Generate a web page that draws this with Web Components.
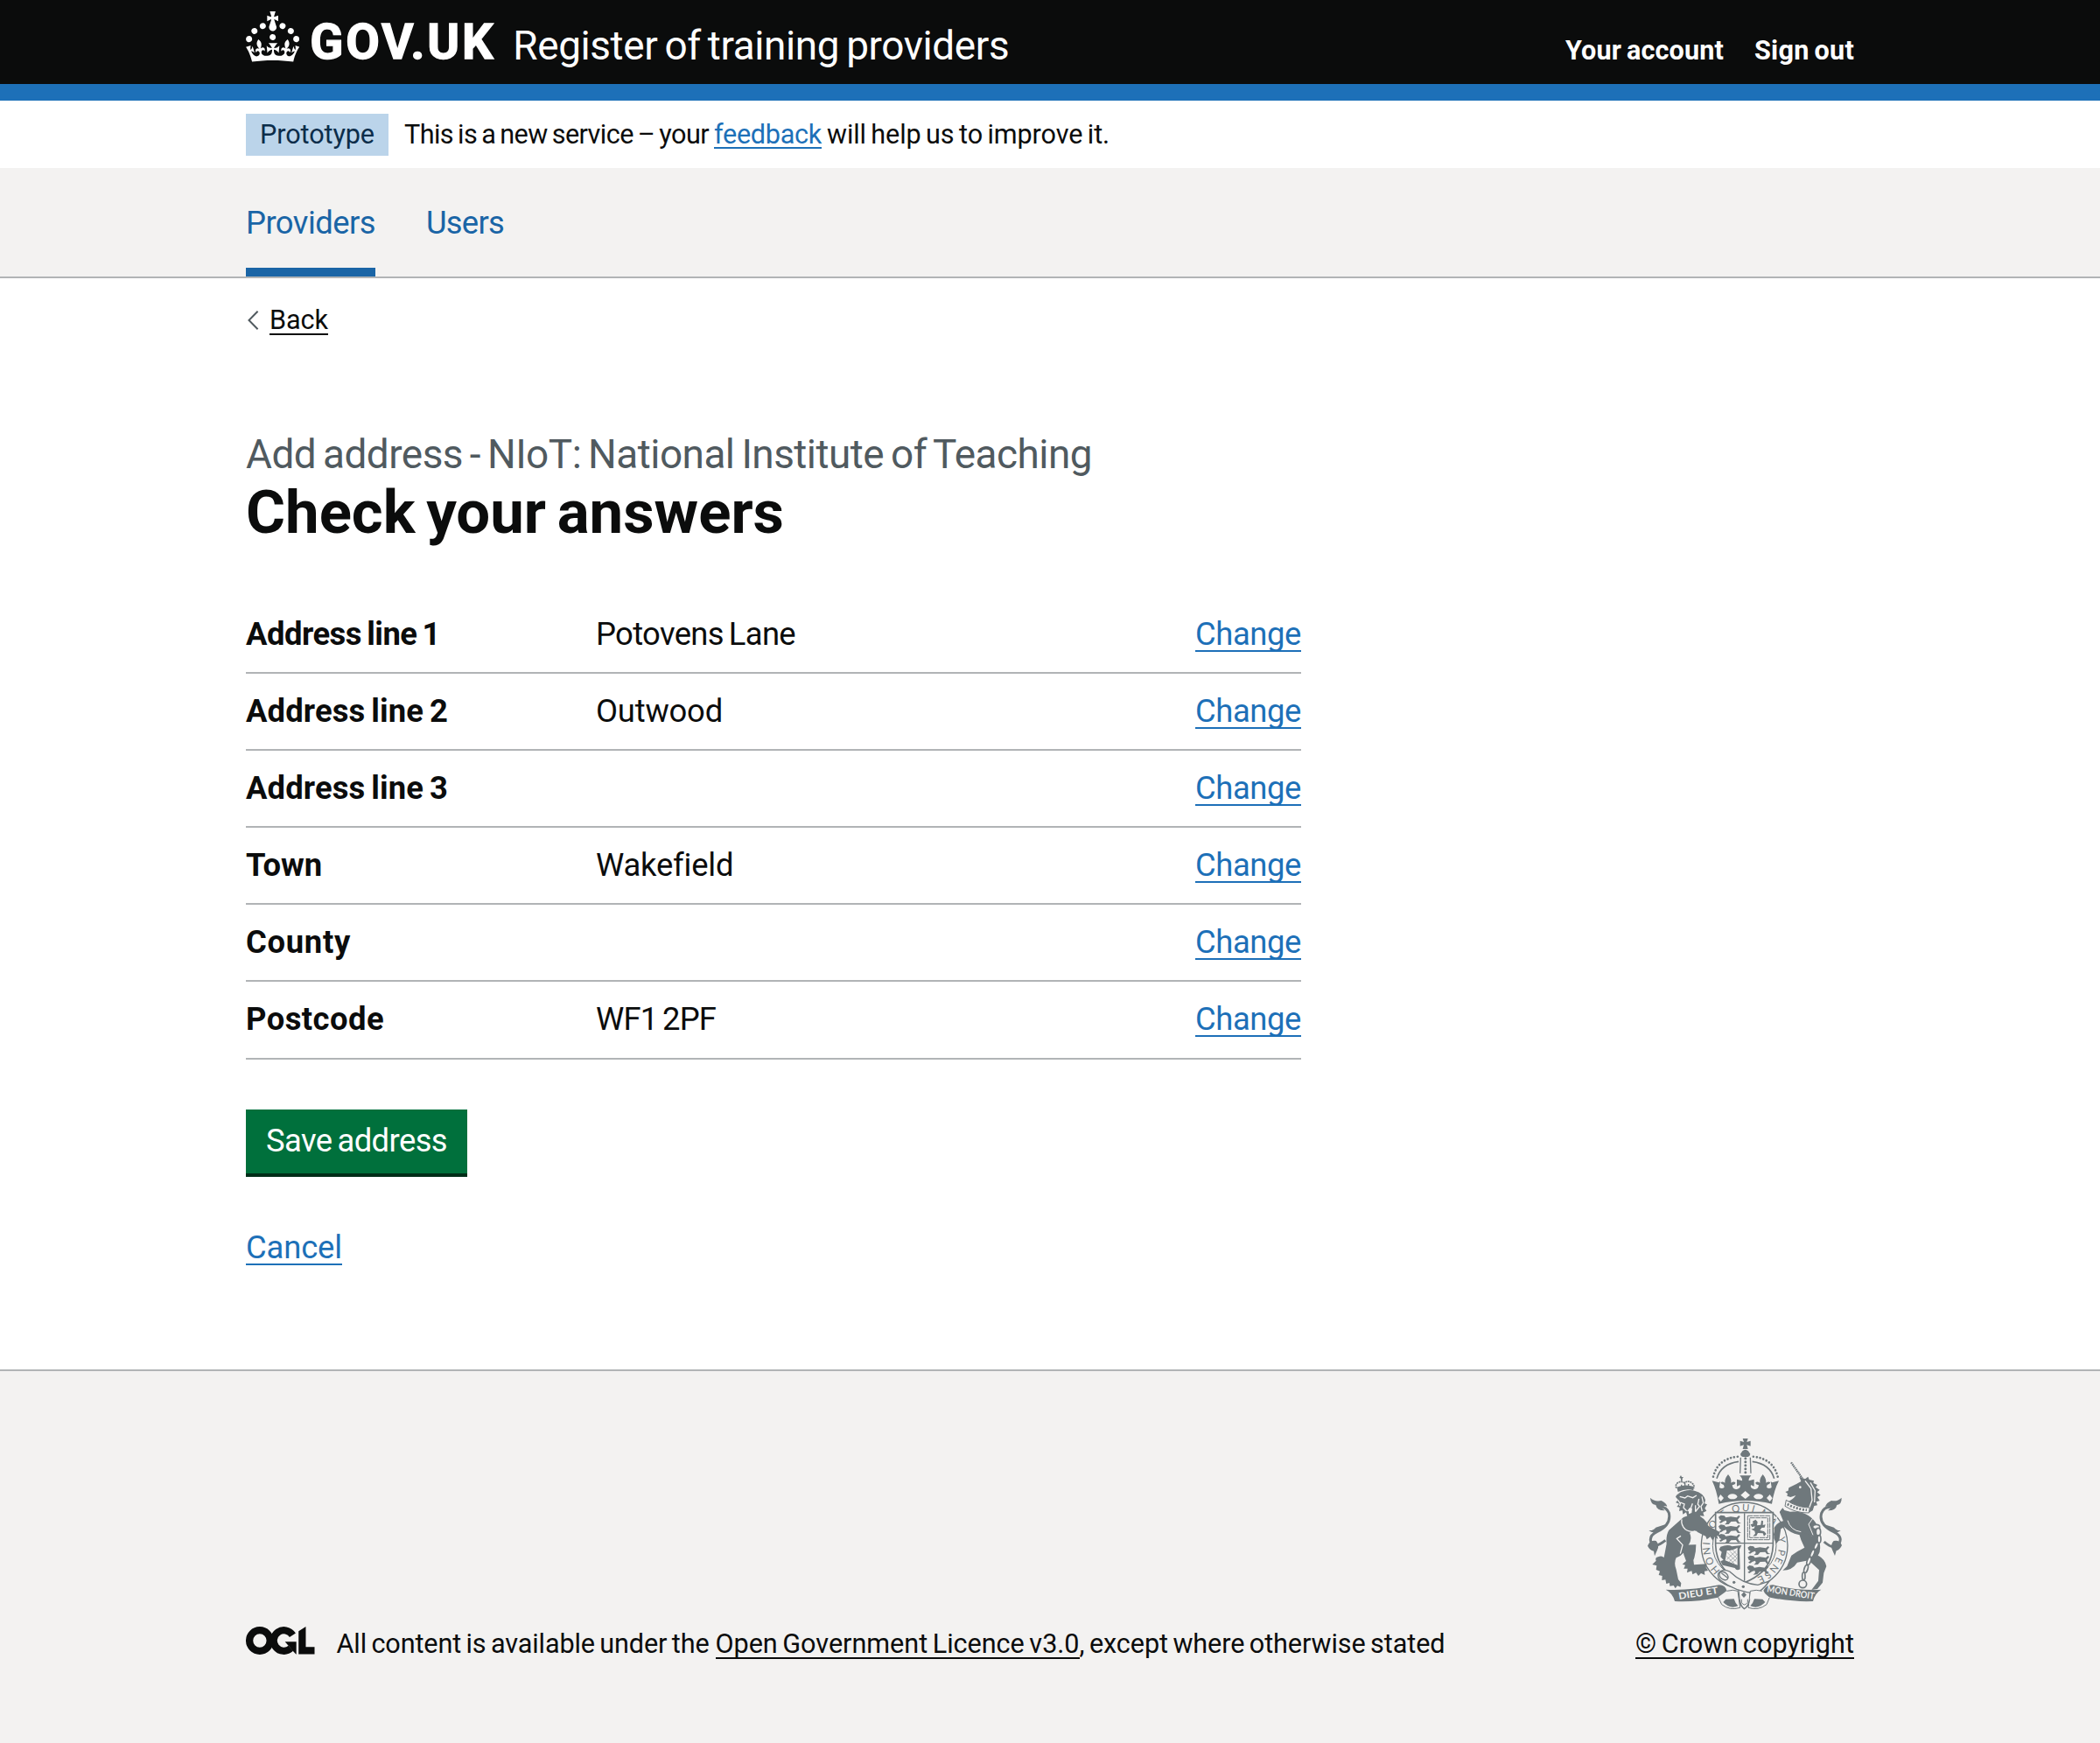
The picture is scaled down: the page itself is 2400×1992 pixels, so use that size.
<!DOCTYPE html>
<html lang="en">
<head>
<meta charset="utf-8">
<title>Check your answers</title>
<style>
  html, body { margin: 0; padding: 0; }
  body { background: #fff; color: #0b0c0c; font-family: Roboto, "Liberation Sans", sans-serif; font-size: 36.4px; }
</style>
</head>
<body>
<reg-page></reg-page>
<script>
const define = (name, html, setup) => customElements.define(name, class extends HTMLElement {
  constructor() {
    super();
    this.attachShadow({ mode: 'open' }).innerHTML = html;
  }
  connectedCallback() { if (setup) setup.call(this, this.shadowRoot); }
});

/* A single line of text, tracked so that it fills the given measure. */
define('fit-text', `<style>
  :host { display: inline-block; white-space: nowrap; vertical-align: baseline; }
  span { display: inline-block; white-space: pre; word-spacing: -0.065em; }
</style><span><slot></slot></span>`, function (root) {
  const span = root.querySelector('span');
  const want = parseFloat(this.getAttribute('measure'));
  this.style.width = want + 'px';
  const count = this.textContent.length;
  span.style.letterSpacing = '0px';
  const natural = span.getBoundingClientRect().width;
  span.style.letterSpacing = ((want - natural) / count) + 'px';
});

define('reg-link', `<style>
  :host { display: inline-block; color: var(--link, #1d70b8); }
  a { display: inline-block; color: inherit; text-decoration: none; line-height: inherit;
      background: linear-gradient(currentColor, currentColor) 0 var(--rule-y, 35px) / 100% 2px no-repeat; }
</style><a><slot></slot></a>`);

define('gov-crown', `<style>:host{display:block;width:61.3px;height:57.5px} svg{display:block;width:100%;height:100%}</style>
<svg viewBox="0 0 32 30" fill="#fff"><path fill-rule="evenodd" d="M22.6 10.4c-1 .4-2-.1-2.4-1-.4-.9.1-2 1-2.4.9-.4 2 .1 2.4 1s-.1 2-1 2.4m-5.9 6.7c-.9.4-2-.1-2.4-1-.4-.9.1-2 1-2.4.9-.4 2 .1 2.4 1s-.1 2-1 2.4m10.8-3.7c-1 .4-2-.1-2.4-1-.4-.9.1-2 1-2.4.9-.4 2 .1 2.4 1s0 2-1 2.4m3.3 4.8c-1 .4-2-.1-2.4-1-.4-.9.1-2 1-2.4.9-.4 2 .1 2.4 1s-.1 2-1 2.4M17 4.7l2.3 1.2V2.5l-2.3.7-.2-.2.9-3h-3.4l.9 3-.2.2c-.1.1-2.3-.7-2.3-.7v3.4L15 4.7c.1.1.1.2.2.2l-1.3 4c-.1.2-.1.4-.1.6 0 1.1.8 2 1.9 2.2h.7c1-.2 1.9-1.1 1.9-2.1 0-.2 0-.4-.1-.6l-1.3-4c-.1-.2 0-.2.1-.3m-7.6 5.7c.9.4 2-.1 2.4-1 .4-.9-.1-2-1-2.4-.9-.4-2 .1-2.4 1s0 2 1 2.4m-5 3c.9.4 2-.1 2.4-1 .4-.9-.1-2-1-2.4-.9-.4-2 .1-2.4 1s.1 2 1 2.4m-3.2 4.8c.9.4 2-.1 2.4-1 .4-.9-.1-2-1-2.4-.9-.4-2 .1-2.4 1s0 2 1 2.4m14.8 11c4.4 0 8.6.3 12.3.8 1.1-4.5 2.4-7 3.7-8.8l-2.5-.9c.2 1.3.3 1.9 0 2.7-.4-.4-.8-1.1-1.1-2.3l-1.2 4c.7-.5 1.3-.8 2-.9-1.1 2.5-2.6 3.1-3.5 3-1.1-.2-1.7-1.2-1.5-2.1.3-1.2 1.5-1.5 2.1-.1 1.1-2.3-.8-3-2-2.3 1.9-1.9 2.1-3.5.6-5.6-2.1 1.6-2.1 3.2-1.2 5.5-1.2-1.4-3.2-.6-2.5 1.6.9-1.4 2.1-.5 1.9.8-.2 1.1-1.7 2.1-3.5 1.9-2.7-.2-2.9-2.1-2.9-3.6.7-.1 1.9.5 2.9 1.9l.4-4.3c-1.1 1.1-2.1 1.4-3.2 1.4.4-1.2 2.1-3 2.1-3h-5.4s1.7 1.9 2.1 3c-1.1 0-2.1-.2-3.2-1.4l.4 4.3c1-1.4 2.2-2 2.9-1.9-.1 1.5-.2 3.4-2.9 3.6-1.9.2-3.4-.8-3.5-1.9-.2-1.3 1-2.2 1.9-.8.7-2.3-1.2-3-2.5-1.6.9-2.2.9-3.9-1.2-5.5-1.5 2-1.3 3.7.6 5.6-1.2-.7-3.1 0-2 2.3.6-1.4 1.8-1.1 2.1.1.2.9-.3 1.9-1.5 2.1-.9.2-2.4-.5-3.5-3 .6 0 1.2.3 2 .9l-1.2-4c-.3 1.1-.7 1.9-1.1 2.3-.3-.8-.2-1.4 0-2.7l-2.9.9C1.3 23 2.6 25.5 3.7 30c3.7-.5 7.9-.8 12.3-.8"/></svg>`);

define('reg-header', `<style>
  :host { display: block; height: 96px; background: #0b0c0c; border-bottom: 19px solid #1d70b8; color: #fff; }
  .in { box-sizing: border-box; width: 1838px; margin: 0 auto; height: 96px; display: flex; align-items: flex-start; }
  gov-crown { margin-top: 13px; }
  .gov { font-weight: 700; font-size: 56px; line-height: 66px; margin: 15px 0 0 12px; -webkit-text-stroke: 1.4px #fff; }
  .name { font-size: 45.9px; line-height: 54px; margin: 25px 0 0 20px; }
  nav { display: flex; margin: 40px 0 0 auto; gap: 35px; font-weight: 700; font-size: 30.6px; line-height: 36px; }
</style><div class="in">
  <gov-crown></gov-crown>
  <div class="gov"><fit-text measure="212">GOV.UK</fit-text></div>
  <div class="name"><fit-text measure="567">Register of training providers</fit-text></div>
  <nav><fit-text measure="181">Your account</fit-text><fit-text measure="114">Sign out</fit-text></nav>
</div>`);

define('reg-phase', `<style>
  :host { display: block; width: 1838px; margin: 0 auto; height: 77px; font-size: 30.6px; line-height: 36px; }
  .row { display: flex; padding-top: 15px; align-items: flex-start; --rule-y: 32px; }
  .tag { background: #bbd4ea; color: #0c2d4a; height: 48px; width: 163px; box-sizing: border-box; padding: 6px 0 0 16px; }
  .msg { display: flex; margin: 6px 0 0 18px; }
  .msg reg-link { margin: 0 6px 0 6px; }
</style><div class="row">
  <div class="tag"><fit-text measure="131">Prototype</fit-text></div>
  <div class="msg"><fit-text measure="348">This is a new service – your</fit-text><reg-link><fit-text measure="123">feedback</fit-text></reg-link><fit-text measure="323">will help us to improve it.</fit-text></div>
</div>`);

define('reg-nav', `<style>
  :host { display: block; background: #f3f2f1; height: 124px; border-bottom: 2px solid #b1b4b6; color: #1a65a6; }
  .in { width: 1838px; margin: 0 auto; display: flex; gap: 58px; }
  .item { box-sizing: border-box; height: 124px; padding-top: 42px; line-height: 42px; }
  .on { border-bottom: 10px solid #1a65a6; }
</style><div class="in">
  <div class="item on"><fit-text measure="148">Providers</fit-text></div>
  <div class="item"><fit-text measure="89">Users</fit-text></div>
</div>`);

define('reg-back', `<style>
  :host { display: flex; align-items: flex-start; font-size: 30.6px; line-height: 36px; --link: #0b0c0c; --rule-y: 33px; padding-top: 30px; }
  svg { width: 15px; height: 24px; margin: 6px 12px 0 0; display: block; }
</style><svg viewBox="0 0 15 24" fill="none" stroke="#505a5f" stroke-width="2"><path d="M13.6 1.8 3.5 12l10.100 10.200"/></svg>
<reg-link><fit-text measure="67">Back</fit-text></reg-link>`);

define('reg-title', `<style>
  :host { display: block; }
  .cap { color: #505a5f; font-size: 45.9px; line-height: 54px; }
  h1 { margin: 0; font-size: 68.9px; line-height: 80px; font-weight: 700; }
</style><div class="cap"><fit-text measure="967">Add address - NIoT: National Institute of Teaching</fit-text></div>
<h1><fit-text measure="615">Check your answers</fit-text></h1>`);

define('reg-row', `<style>
  :host { box-sizing: border-box; display: grid; grid-template-columns: 400px 1fr auto; height: 88.1px; padding-top: 22px; border-bottom: 2px solid #b1b4b6; line-height: 42px; --rule-y: 39px; }
  .k { font-weight: 700; }
</style><div class="k"><slot name="key"></slot></div><div><slot name="value"></slot></div>
<reg-link><fit-text measure="121">Change</fit-text></reg-link>`);

define('reg-button', `<style>
  :host { display: block; width: 253px; height: 73px; background: #00703c; color: #fff; border-bottom: 4px solid #002d18; }
  button { all: unset; display: block; box-sizing: border-box; width: 100%; height: 100%; padding-left: 23px; line-height: 42px; }
</style><button><slot></slot></button>`);

define('ogl-logo', `<style>:host{display:block;width:78.500px;height:32px} svg{display:block;width:100%;height:100%}</style>
<svg viewBox="0 0 483.200 195.700" fill="none" stroke="#0b0c0c" stroke-width="50.700">
  <circle cx="97.800" cy="97.800" r="72.500"/>
  <path d="M329 59A72.500 72.500 0 1 0 316 152"/>
  <path d="M275 105.700h80v87.800h-3L332 171l-33-38z" fill="#0b0c0c" stroke="none"/>
  <path d="M421.500 .1v142.700h61.700v50.700H370.800V32.400z" fill="#0b0c0c" stroke="none"/>
</svg>`);

define('royal-arms', `<style>:host{display:block;width:222px;height:196px} svg{display:block;width:100%;height:100%}</style>
<svg viewBox="72 39 666 588" fill="#6f787c" stroke="none">
  <defs>
    <path id="ring" d="M328 497A118 118 0 1 1 440 518"/>
    <g id="beast"><path d="M0 6l8-6 12 2 5 6 17-3 20 3 8-7 4 4-8 10 4 9 8 4-12 1-6-8-17 1-8 9-14 1 7-7-2-7-9 3-9 6-6-3 8-6-6-3z"/></g>
  </defs>

  <!-- imperial crown -->
  <path d="M398 39h18l-4 12 13-4v18l-13-4 4 14h-18l4-14-13 4V47l13 4z"/>
  <path d="M397 82q10-9 20 0l7 10q-2 9-8 10h-18q-7-1-8-10z"/>
  <g fill="none" stroke="#6f787c">
    <path d="M297 170Q312 108 382 101M518 170Q503 108 433 101" stroke-width="8" stroke-linecap="round" stroke-dasharray=".1 11.500"/>
    <path d="M309 176Q324 126 384 118M506 176Q491 126 431 118" stroke-width="5"/>
    <path d="M391 104l-2 54M424 104l2 54" stroke-width="4"/>
    <path d="M407.500 107v50" stroke-width="9" stroke-linecap="round" stroke-dasharray=".1 12"/>
  </g>
  <path d="M293 184l23 6 5-4-3 21q9 7 17-1l-2-8q-12-4-10-9 6-4 14 2-2-13 11-29 13 16 10 29 9-7 15-1 1 7-11 9 2 17 18 13 12-3 9-14l-11 5v-24l18 5q2-7-8-18h39q-10 11-8 18l18-5v24l-11-5q-3 11 9 14 16 4 18-13-12-2-11-9 6-6 15 1-3-13 10-29 13 16 11 29 8-6 14-2 2 5-10 9l-2 8q8 8 17 1l-3-21 5 4 23-6q-17 33-24 79-89-22-182 0-7-46-23-79z"/>
  <g fill="#f3f2f1"><path d="M322 231l11 12-10 12-9-11zM407 219l16 14-16 13-16-13zM491 231l9 13-9 11-11-12z"/><ellipse cx="363" cy="238" rx="16" ry="9"/><ellipse cx="452" cy="238" rx="16" ry="9"/></g>

  <!-- garter -->
  <g fill="none" stroke="#6f787c" stroke-width="4"><circle cx="404" cy="406" r="148"/><circle cx="404" cy="406" r="109" stroke-width="3"/></g>
  <text font-family="Lato, sans-serif" font-size="34" letter-spacing="6" fill="#6f787c"><textPath href="#ring" startOffset="8">HONI SOIT QUI MAL Y PENSE</textPath></text>

  <!-- shield -->
  <path d="M305 293h197v112q-3 91-98 128-96-37-99-128z" fill="#f3f2f1" stroke="#6f787c" stroke-width="5"/>
  <path d="M404 295v232M306 398h195" stroke="#6f787c" stroke-width="4"/>
  <path d="M415 304h76v82h-76zM422 311h62v68h-62z" fill="none" stroke="#6f787c" stroke-width="3" stroke-dasharray="18 2"/>
  <path d="M432 323l10-6 7 8-2 12 13-2 2-15 6 2-1 14 9-2-3 10-10 1-6 9 14 3 8 9-8 8-4-10-17-1-5 10-12 1 8-9-2-9-12-6 10-3 3-7-10 3-5-9 9-3z"/>
  <use href="#beast" x="315" y="302"/><use href="#beast" x="315" y="334"/><use href="#beast" x="315" y="366"/>
  <use href="#beast" x="415" y="407"/><use href="#beast" x="415" y="440"/><use href="#beast" x="413" y="474"/>
  <path d="M322 410q26-10 39-1l33-4-7 14 2 68q-12 7-18-4l-42-10-7-13 10-5-10-10 4-17-9-8z"/>
  <path d="M344 423q20 0 36-10v60q-26-9-42-16z" fill="#f3f2f1"/>
  <path d="M345 430l31 31M353 424l25 26M363 420l16 18M343 443l26 25M376 424l-33 30M379 437l-27 24M379 450l-18 15" stroke="#6f787c" stroke-width="1.500"/>

  <!-- belt and buckle -->
  <g fill="#f3f2f1" stroke="#6f787c" stroke-width="4">
    <path d="M383 550l5 53q14 32 34 0l2-53z"/>
    <path d="M314 503q13-21 39-8 45 43 97 46l39-13q-24 34-48 42-70-6-118-44-12-9-9-23z"/>
    <ellipse cx="333" cy="510" rx="17" ry="12" transform="rotate(40 333 510)"/>
    <path d="M325 500l23 18"/>
  </g>
  <circle cx="368" cy="532" r="5"/><circle cx="400" cy="547" r="5"/><path d="M402 565l9 10-9 10-9-10z"/>

  <!-- lion -->
  <g>
    <path d="M171 209q-6-12 6-19 10-6 20 1 14-9 26 0 12 9 6 19" fill="none" stroke="#6f787c" stroke-width="5" stroke-dasharray="6 2"/>
    <path d="M200 190v20M188 197v10M212 195v10" stroke="#6f787c" stroke-width="4"/>
    <path d="M186 165l3 6 6 0-4 5v9h-5v-9l-5-3zM172 206q30-12 58-2l-1 13q-24-8-53 5z"/>
    <path d="M177 227q31-16 58-8 28 7 35 31l-3 12 9 3-8 13 6 9-12 6 4 12-14-1-3 12-12-5-11 8-5-17-12 7-5-17-11 7-2-14-11 3 2-13-10-2 8-10-12-5 9-8-9-11q5-13 19-12z"/>
    <path d="M182 238l18 5 9-7 18 6 13-8M184 258l14 6-3 12 11 11M226 262l-5 14-12 12M248 246l-4 18 6 8-14 18M258 238l5 22-8 12 4 16M176 250l8 12-2 8M236 268v22" fill="none" stroke="#f3f2f1" stroke-width="4"/>
    <path d="M213 278h12l-2 16-10 4z" fill="#f3f2f1"/>
    <path d="M195 309q22-11 46-9 30 13 39 38l17 10 23 12-3 8 7 8-14-4 3 12-13-8-4 14-9-14-12 9-4-11-38-19-17 7q10 23-4 42-11 31-42 44-9 18 0 40l7 34 10 13-2 13-11-4-7 9-6-10-13 2-1-11-11 3-3-14-12 2 1-15-12-3 4-13-13-5 2-14-15-4 13-13q-5-12 7-13 12-6 20 2l9-47q-3-29 8-47z"/>
    <path d="M190 404l48-1q0 32-9 53l2 16 44-3-3 12 7 11-12 2 1 13-13-6-9 9-8-11-12 6-3-12-16 6 2-14-13 0 5-12-10-3 13-11-8-22z"/>
    <path d="M189 316q-3 20 12 34 13 10 40 8M186 373l-14 9 20 22-8 30" fill="none" stroke="#f3f2f1" stroke-width="4"/>
    <path d="M133 388q-39 31-49 8-9-24 21-38 49-23 40-64-8-19-28-21" fill="none" stroke="#6f787c" stroke-width="9"/>
    <path d="M81 242q15 15 38 10 17 8 20 20-14-5-20 3l12 11q-27 1-31-19-18-3-19-25zM77 354q13 2 23-10l32-10q-8 20-27 24-15 8-29-4zM72 407q8-20 29-17 14 14 3 34l-8 18-3-17q-14-3-21-18z"/>
  </g>

  <!-- unicorn -->
  <g>
    <path d="M564 121l38 54" stroke="#6f787c" stroke-width="7" stroke-dasharray="5 2" fill="none"/>
    <path d="M592 170l20 8 10-8 4 10 16 4-2 8 14 6-6 8 14 9-9 8 12 10-11 7 8 12-12 4 4 12-11 2-5 16-10 6q-43-2-80-34 24-10 32-24l-18 6-12-4 2-8-8-6 10-4 2-10q26-12 42-22z"/>
    <path d="M612 184l20 26 4 40-12 32M630 190l16 28-2 40" fill="none" stroke="#f3f2f1" stroke-width="4"/>
    <circle cx="595" cy="206" r="4" fill="#f3f2f1"/>
    <path d="M547 250q37 26 81 26l-3 18q-45 1-82-23z" fill="#f3f2f1" stroke="#6f787c" stroke-width="3"/>
    <path d="M551 264q33 18 67 20" fill="none" stroke="#6f787c" stroke-width="8" stroke-dasharray="6 5"/>
    <path d="M524 290l11-13 6 8 20 5q38-2 62 13 20 13 29 32l5 28-17 13q-24-10-50-7-30-6-49-26l-12 6-6 39-10 12-8-19 2-38q14-20 30-21z"/>
    <path d="M590 362q20-2 46 12l18-14q12 13 8 37 5 29-6 43 24 12 29 37l-9 23-4 33-18 22-20 3 23-31 3-37-36-33-39 7q-17 27-50 27l15-14 15-37 20-13 25-14q-14-28-20-51z"/>
    <path d="M526 285l-8 16-6 18M552 320q10 34 46 39M640 310l-16 23 15 37" fill="none" stroke="#f3f2f1" stroke-width="3"/>
    <path d="M677 393q35 31 51 8 15-26-18-42-53-26-42-64 9-23 34-21" fill="none" stroke="#6f787c" stroke-width="9"/>
    <path d="M737 242q-14 14-35 10-18 8-21 21 14-6 21 2l-12 11q27 1 31-19 17-3 16-25zM734 354q-13 2-23-10l-32-10q8 20 27 24 15 8 28-4zM738 405q-8-20-28-15-14 14-4 33l8 18 5-17q13-4 19-19z"/>
    <g fill="#f3f2f1" stroke="#6f787c" stroke-width="5">
      <ellipse cx="650" cy="342" rx="12" ry="8"/><ellipse cx="657" cy="359" rx="8" ry="13"/><ellipse cx="660" cy="384" rx="6" ry="13"/><ellipse cx="650" cy="407" rx="6" ry="13" transform="rotate(24 650 407)"/><ellipse cx="637" cy="433" rx="6" ry="14" transform="rotate(22 637 433)"/><ellipse cx="625" cy="459" rx="6" ry="14" transform="rotate(20 625 459)"/><ellipse cx="615" cy="486" rx="6" ry="14" transform="rotate(18 615 486)"/><ellipse cx="607" cy="511" rx="5" ry="13"/><circle cx="604" cy="538" r="13"/>
    </g>
  </g>

  <!-- motto scroll -->
  <path d="M134 557q84 4 183-16 22 1 26 19-9 21-31 24-78 17-147 13-7-28-31-40zM667 557q-84 4-165-16-22-1-33 19 9 22 27 25 79 15 143 12 7-28 28-40z"/>
  <path d="M314 583l12 25q27 22 63 11l-8-57q-15-6-38 0M490 584l-10 24q-28 22-63 11l7-57q21-6 40 0" fill="#f3f2f1" stroke="#6f787c" stroke-width="3"/>
  <path d="M331 600l9-10 28-1q5 16 14 24-28 12-51-13zM475 600l-9-10-28-1q-5 16-14 24 28 12 51-13z"/>
  <path d="M387 590q4 25 16 33 14-7 19-33" fill="#f3f2f1" stroke="#6f787c" stroke-width="4"/><path d="M394 590v11q9 16 21 0v-11" fill="none" stroke="#6f787c" stroke-width="3"/>
  <g font-family="Lato, sans-serif" font-weight="700" font-size="32" fill="#f3f2f1">
    <text transform="translate(180 591) rotate(-9)" textLength="136" lengthAdjust="spacingAndGlyphs">DIEU ET</text>
    <text transform="translate(480 565) rotate(9)" textLength="164" lengthAdjust="spacingAndGlyphs">MON DROIT</text>
  </g>
</svg>`);

define('reg-footer', `<style>
  :host { display: block; box-sizing: border-box; height: 427.500px; background: #f3f2f1; border-top: 2px solid #b1b4b6; font-size: 30.6px; line-height: 36px; --link: #0b0c0c; --rule-y: 33px; }
  .in { width: 1838px; margin: 0 auto; padding-top: 77px; display: flex; align-items: flex-end; justify-content: space-between; }
  .lic { display: flex; align-items: flex-start; }
  ogl-logo { margin: -2px 25px 0 0; }
  .lic reg-link { margin-left: 7px; }
  .crown { display: flex; flex-direction: column; align-items: center; gap: 21px; }
</style><div class="in">
  <div class="lic"><ogl-logo></ogl-logo><fit-text measure="426">All content is available under the</fit-text><reg-link><fit-text measure="416">Open Government Licence v3.0</fit-text></reg-link><fit-text measure="418">, except where otherwise stated</fit-text></div>
  <div class="crown"><royal-arms></royal-arms><reg-link><fit-text measure="250">© Crown copyright</fit-text></reg-link></div>
</div>`);

define('reg-page', `<style>
  :host { display: flex; flex-direction: column; height: 1992px; overflow: hidden; }
  main { width: 1838px; margin: 0 auto; flex: 1; }
  reg-title { margin-top: 108px; }
  .list { width: 1206px; margin-top: 56px; }
  reg-button { margin-top: 57.400px; }
  .cancel { margin-top: 60px; line-height: 42px; --rule-y: 39px; }
</style>
<reg-header></reg-header><reg-phase></reg-phase><reg-nav></reg-nav>
<main>
  <reg-back></reg-back>
  <reg-title></reg-title>
  <div class="list">
    <reg-row><fit-text slot="key" measure="222">Address line 1</fit-text><fit-text slot="value" measure="228">Potovens Lane</fit-text></reg-row>
    <reg-row><fit-text slot="key" measure="231">Address line 2</fit-text><fit-text slot="value" measure="145">Outwood</fit-text></reg-row>
    <reg-row><fit-text slot="key" measure="231">Address line 3</fit-text></reg-row>
    <reg-row><fit-text slot="key" measure="87">Town</fit-text><fit-text slot="value" measure="156">Wakefield</fit-text></reg-row>
    <reg-row><fit-text slot="key" measure="120">County</fit-text></reg-row>
    <reg-row><fit-text slot="key" measure="158">Postcode</fit-text><fit-text slot="value" measure="137">WF1 2PF</fit-text></reg-row>
  </div>
  <reg-button><fit-text measure="207">Save address</fit-text></reg-button>
  <div class="cancel"><reg-link><fit-text measure="110">Cancel</fit-text></reg-link></div>
</main>
<reg-footer></reg-footer>`);
</script>
</body>
</html>
